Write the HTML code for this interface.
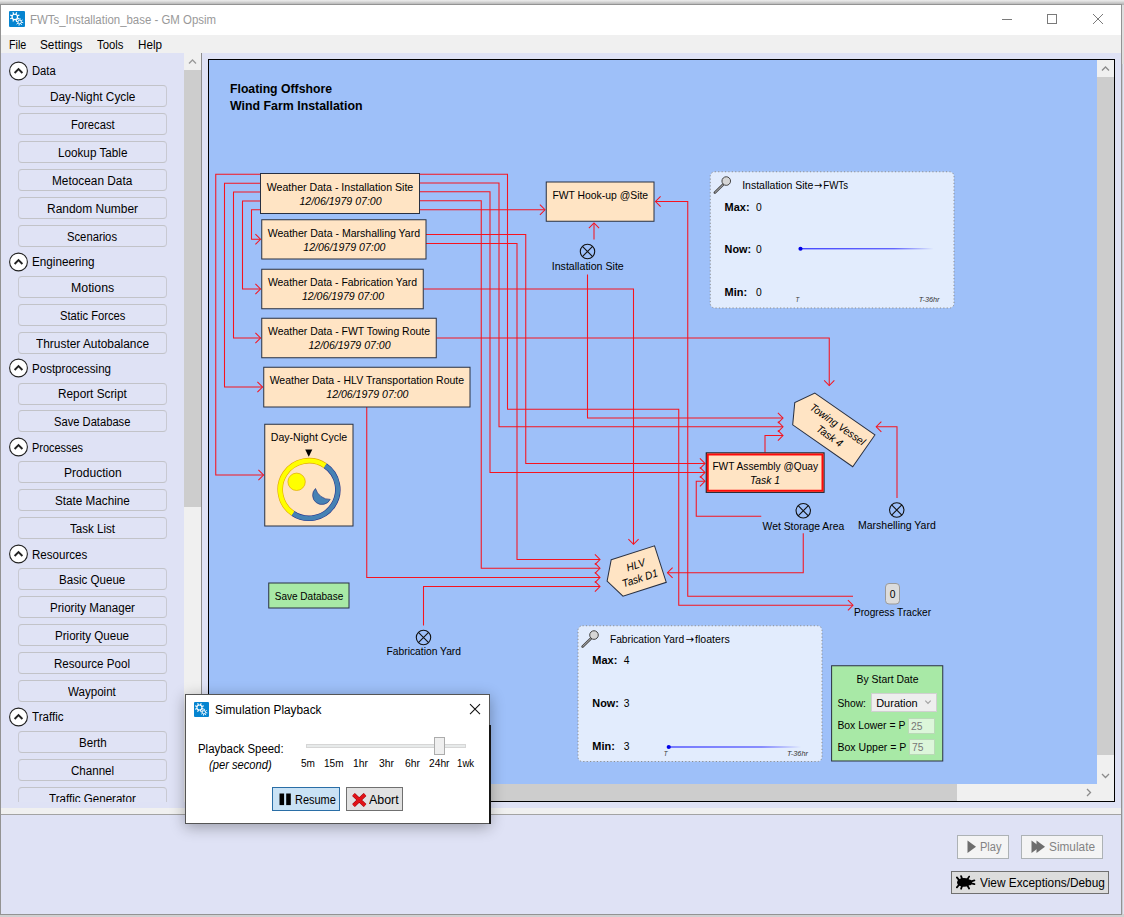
<!DOCTYPE html>
<html lang="en"><head><meta charset="utf-8"><title>FWTs_Installation_base - GM Opsim</title>
<style>
html,body{margin:0;padding:0}
body{width:1124px;height:917px;position:relative;overflow:hidden;background:#d0d0d0;font-family:"Liberation Sans",Arial,sans-serif;font-size:12px;color:#000}
.t{position:absolute;white-space:nowrap;line-height:1;transform-origin:0 0;display:block}
</style></head>
<body>
<div style="position:absolute;left:0px;top:0px;width:1124px;height:5px;background:linear-gradient(#ececec 0,#e0e0e0 25%,#c6c6c6 60%,#b0b0b0 100%);"></div>
<div style="position:absolute;left:1122px;top:5px;width:2px;height:59px;background:#dedede;"></div>
<div style="position:absolute;left:1122px;top:64px;width:2px;height:850px;background:#e1e4f1;border-left:1px solid #c9cbd3;box-sizing:border-box;"></div>
<div style="position:absolute;left:0px;top:4px;width:1122px;height:910.5px;background:#dfe2f5;border:1px solid #939393;box-sizing:border-box;"></div>
<div style="position:absolute;left:1px;top:5px;width:1120px;height:30px;background:#fff;"></div>
<svg style="position:absolute;left:9px;top:11px" width="16" height="16" viewBox="0 0 16 16"><rect width="16" height="16" rx="1.1" fill="#0584d0"/><line x1="8.29" y1="6.93" x2="10.42" y2="7.81" stroke="#fff" stroke-width="1.15"/><line x1="6.83" y1="8.39" x2="7.71" y2="10.52" stroke="#fff" stroke-width="1.15"/><line x1="4.77" y1="8.39" x2="3.89" y2="10.52" stroke="#fff" stroke-width="1.15"/><line x1="3.31" y1="6.93" x2="1.18" y2="7.81" stroke="#fff" stroke-width="1.15"/><line x1="3.31" y1="4.87" x2="1.18" y2="3.99" stroke="#fff" stroke-width="1.15"/><line x1="4.77" y1="3.41" x2="3.89" y2="1.28" stroke="#fff" stroke-width="1.15"/><line x1="6.83" y1="3.41" x2="7.71" y2="1.28" stroke="#fff" stroke-width="1.15"/><line x1="8.29" y1="4.87" x2="10.42" y2="3.99" stroke="#fff" stroke-width="1.15"/><circle cx="5.8" cy="5.9" r="2.7" fill="none" stroke="#fff" stroke-width="1.15"/><line x1="12.32" y1="11.3" x2="14.24" y2="11.64" stroke="#fff" stroke-width="0.9"/><line x1="11.6" y1="12.43" x2="12.72" y2="14.03" stroke="#fff" stroke-width="0.9"/><line x1="10.3" y1="12.72" x2="9.96" y2="14.64" stroke="#fff" stroke-width="0.9"/><line x1="9.17" y1="12" x2="7.57" y2="13.12" stroke="#fff" stroke-width="0.9"/><line x1="8.88" y1="10.7" x2="6.96" y2="10.36" stroke="#fff" stroke-width="0.9"/><line x1="9.6" y1="9.57" x2="8.48" y2="7.97" stroke="#fff" stroke-width="0.9"/><line x1="10.9" y1="9.28" x2="11.24" y2="7.36" stroke="#fff" stroke-width="0.9"/><line x1="12.03" y1="10" x2="13.63" y2="8.88" stroke="#fff" stroke-width="0.9"/><circle cx="10.6" cy="11" r="1.75" fill="none" stroke="#fff" stroke-width="0.9"/></svg>
<span class="t" style="left:30.2px;top:14.1px;font-size:12px;transform:scaleX(0.9519);color:#999;">FWTs_Installation_base - GM Opsim</span>
<svg style="position:absolute;left:990px;top:5px" width="131" height="30" viewBox="990 5 131 30" fill="none" stroke="#7a7a7a" stroke-width="1"><line x1="1002" y1="19.5" x2="1012" y2="19.5"/><rect x="1047.5" y="14.5" width="9" height="9"/><path d="M1093,14 L1103,24 M1103,14 L1093,24"/></svg>
<div style="position:absolute;left:1px;top:35px;width:1120px;height:18px;background:#f0f0f0;"></div>
<span class="t" style="left:8.5px;top:39px;font-size:12px;transform:scaleX(0.8947);">File</span>
<span class="t" style="left:39.7px;top:39px;font-size:12px;transform:scaleX(0.9802);">Settings</span>
<span class="t" style="left:97.3px;top:39px;font-size:12px;transform:scaleX(0.9424);">Tools</span>
<span class="t" style="left:138px;top:39px;font-size:12px;transform:scaleX(0.9724);">Help</span>
<div style="position:absolute;left:0px;top:53px;width:184px;height:749px;overflow:hidden;"><svg style="position:absolute;left:8px;top:7.9px" width="21" height="20" viewBox="0 0 21 20"><circle cx="10.5" cy="10" r="8.9" fill="#fff" stroke="#222" stroke-width="1.1"/><polyline points="6.6,12 10.5,8 14.4,12" fill="none" stroke="#222" stroke-width="1.9"/></svg><span class="t" style="left:32.4px;top:12.3px;font-size:12px;transform:scaleX(0.9350);">Data</span><div style="position:absolute;left:17.6px;top:32px;width:149.9px;height:22px;border:1px solid #c8c9d2;border-top-color:#c2c3c8;border-bottom-color:#c2c3c8;border-radius:4px;box-sizing:border-box;background:#e0e3f5;"></div><span class="t" style="left:49.7px;top:37.86px;font-size:12px;transform:scaleX(0.9851);">Day-Night Cycle</span><div style="position:absolute;left:17.6px;top:60px;width:149.9px;height:22px;border:1px solid #c8c9d2;border-top-color:#c2c3c8;border-bottom-color:#c2c3c8;border-radius:4px;box-sizing:border-box;background:#e0e3f5;"></div><span class="t" style="left:70.6px;top:65.82px;font-size:12px;transform:scaleX(0.9340);">Forecast</span><div style="position:absolute;left:17.6px;top:88px;width:149.9px;height:22px;border:1px solid #c8c9d2;border-top-color:#c2c3c8;border-bottom-color:#c2c3c8;border-radius:4px;box-sizing:border-box;background:#e0e3f5;"></div><span class="t" style="left:57.7px;top:93.78px;font-size:12px;transform:scaleX(0.9750);">Lookup Table</span><div style="position:absolute;left:17.6px;top:116px;width:149.9px;height:22px;border:1px solid #c8c9d2;border-top-color:#c2c3c8;border-bottom-color:#c2c3c8;border-radius:4px;box-sizing:border-box;background:#e0e3f5;"></div><span class="t" style="left:52.25px;top:121.74px;font-size:12px;transform:scaleX(0.9867);">Metocean Data</span><div style="position:absolute;left:17.6px;top:144px;width:149.9px;height:22px;border:1px solid #c8c9d2;border-top-color:#c2c3c8;border-bottom-color:#c2c3c8;border-radius:4px;box-sizing:border-box;background:#e0e3f5;"></div><span class="t" style="left:46.85px;top:149.7px;font-size:12px;transform:scaleX(0.9970);">Random Number</span><div style="position:absolute;left:17.6px;top:172px;width:149.9px;height:22px;border:1px solid #c8c9d2;border-top-color:#c2c3c8;border-bottom-color:#c2c3c8;border-radius:4px;box-sizing:border-box;background:#e0e3f5;"></div><span class="t" style="left:67.4px;top:177.66px;font-size:12px;transform:scaleX(0.9370);">Scenarios</span><svg style="position:absolute;left:8px;top:198.62px" width="21" height="20" viewBox="0 0 21 20"><circle cx="10.5" cy="10" r="8.9" fill="#fff" stroke="#222" stroke-width="1.1"/><polyline points="6.6,12 10.5,8 14.4,12" fill="none" stroke="#222" stroke-width="1.9"/></svg><span class="t" style="left:32.4px;top:203.02px;font-size:12px;transform:scaleX(0.9758);">Engineering</span><div style="position:absolute;left:17.6px;top:223px;width:149.9px;height:22px;border:1px solid #c8c9d2;border-top-color:#c2c3c8;border-bottom-color:#c2c3c8;border-radius:4px;box-sizing:border-box;background:#e0e3f5;"></div><span class="t" style="left:70.8px;top:228.58px;font-size:12px;transform:scaleX(1.0281);">Motions</span><div style="position:absolute;left:17.6px;top:251px;width:149.9px;height:22px;border:1px solid #c8c9d2;border-top-color:#c2c3c8;border-bottom-color:#c2c3c8;border-radius:4px;box-sizing:border-box;background:#e0e3f5;"></div><span class="t" style="left:59.7px;top:256.54px;font-size:12px;transform:scaleX(0.9340);">Static Forces</span><div style="position:absolute;left:17.6px;top:279px;width:149.9px;height:22px;border:1px solid #c8c9d2;border-top-color:#c2c3c8;border-bottom-color:#c2c3c8;border-radius:4px;box-sizing:border-box;background:#e0e3f5;"></div><span class="t" style="left:35.9px;top:284.5px;font-size:12px;transform:scaleX(0.9906);">Thruster Autobalance</span><svg style="position:absolute;left:8px;top:305.46px" width="21" height="20" viewBox="0 0 21 20"><circle cx="10.5" cy="10" r="8.9" fill="#fff" stroke="#222" stroke-width="1.1"/><polyline points="6.6,12 10.5,8 14.4,12" fill="none" stroke="#222" stroke-width="1.9"/></svg><span class="t" style="left:32.4px;top:309.86px;font-size:12px;transform:scaleX(0.9629);">Postprocessing</span><div style="position:absolute;left:17.6px;top:330px;width:149.9px;height:22px;border:1px solid #c8c9d2;border-top-color:#c2c3c8;border-bottom-color:#c2c3c8;border-radius:4px;box-sizing:border-box;background:#e0e3f5;"></div><span class="t" style="left:58px;top:335.42px;font-size:12px;transform:scaleX(0.9825);">Report Script</span><div style="position:absolute;left:17.6px;top:357px;width:149.9px;height:22px;border:1px solid #c8c9d2;border-top-color:#c2c3c8;border-bottom-color:#c2c3c8;border-radius:4px;box-sizing:border-box;background:#e0e3f5;"></div><span class="t" style="left:54.2px;top:363.38px;font-size:12px;transform:scaleX(0.9311);">Save Database</span><svg style="position:absolute;left:8px;top:384.34px" width="21" height="20" viewBox="0 0 21 20"><circle cx="10.5" cy="10" r="8.9" fill="#fff" stroke="#222" stroke-width="1.1"/><polyline points="6.6,12 10.5,8 14.4,12" fill="none" stroke="#222" stroke-width="1.9"/></svg><span class="t" style="left:32.4px;top:388.74px;font-size:12px;transform:scaleX(0.9103);">Processes</span><div style="position:absolute;left:17.6px;top:408px;width:149.9px;height:22px;border:1px solid #c8c9d2;border-top-color:#c2c3c8;border-bottom-color:#c2c3c8;border-radius:4px;box-sizing:border-box;background:#e0e3f5;"></div><span class="t" style="left:63.6px;top:414.3px;font-size:12px;transform:scaleX(1.0040);">Production</span><div style="position:absolute;left:17.6px;top:436px;width:149.9px;height:22px;border:1px solid #c8c9d2;border-top-color:#c2c3c8;border-bottom-color:#c2c3c8;border-radius:4px;box-sizing:border-box;background:#e0e3f5;"></div><span class="t" style="left:55px;top:442.26px;font-size:12px;transform:scaleX(0.9751);">State Machine</span><div style="position:absolute;left:17.6px;top:464px;width:149.9px;height:22px;border:1px solid #c8c9d2;border-top-color:#c2c3c8;border-bottom-color:#c2c3c8;border-radius:4px;box-sizing:border-box;background:#e0e3f5;"></div><span class="t" style="left:69.88px;top:470.22px;font-size:12px;transform:scaleX(0.9650);">Task List</span><svg style="position:absolute;left:8px;top:491.18px" width="21" height="20" viewBox="0 0 21 20"><circle cx="10.5" cy="10" r="8.9" fill="#fff" stroke="#222" stroke-width="1.1"/><polyline points="6.6,12 10.5,8 14.4,12" fill="none" stroke="#222" stroke-width="1.9"/></svg><span class="t" style="left:32.4px;top:495.58px;font-size:12px;transform:scaleX(0.9650);">Resources</span><div style="position:absolute;left:17.6px;top:515px;width:149.9px;height:22px;border:1px solid #c8c9d2;border-top-color:#c2c3c8;border-bottom-color:#c2c3c8;border-radius:4px;box-sizing:border-box;background:#e0e3f5;"></div><span class="t" style="left:59.25px;top:521.14px;font-size:12px;transform:scaleX(0.9650);">Basic Queue</span><div style="position:absolute;left:17.6px;top:543px;width:149.9px;height:22px;border:1px solid #c8c9d2;border-top-color:#c2c3c8;border-bottom-color:#c2c3c8;border-radius:4px;box-sizing:border-box;background:#e0e3f5;"></div><span class="t" style="left:49.92px;top:549.1px;font-size:12px;transform:scaleX(0.9650);">Priority Manager</span><div style="position:absolute;left:17.6px;top:571px;width:149.9px;height:22px;border:1px solid #c8c9d2;border-top-color:#c2c3c8;border-bottom-color:#c2c3c8;border-radius:4px;box-sizing:border-box;background:#e0e3f5;"></div><span class="t" style="left:55.39px;top:577.06px;font-size:12px;transform:scaleX(0.9650);">Priority Queue</span><div style="position:absolute;left:17.6px;top:599px;width:149.9px;height:22px;border:1px solid #c8c9d2;border-top-color:#c2c3c8;border-bottom-color:#c2c3c8;border-radius:4px;box-sizing:border-box;background:#e0e3f5;"></div><span class="t" style="left:54.42px;top:605.02px;font-size:12px;transform:scaleX(0.9650);">Resource Pool</span><div style="position:absolute;left:17.6px;top:627px;width:149.9px;height:22px;border:1px solid #c8c9d2;border-top-color:#c2c3c8;border-bottom-color:#c2c3c8;border-radius:4px;box-sizing:border-box;background:#e0e3f5;"></div><span class="t" style="left:68.48px;top:632.98px;font-size:12px;transform:scaleX(0.9650);">Waypoint</span><svg style="position:absolute;left:8px;top:653.94px" width="21" height="20" viewBox="0 0 21 20"><circle cx="10.5" cy="10" r="8.9" fill="#fff" stroke="#222" stroke-width="1.1"/><polyline points="6.6,12 10.5,8 14.4,12" fill="none" stroke="#222" stroke-width="1.9"/></svg><span class="t" style="left:32.4px;top:658.34px;font-size:12px;transform:scaleX(0.9650);">Traffic</span><div style="position:absolute;left:17.6px;top:678px;width:149.9px;height:22px;border:1px solid #c8c9d2;border-top-color:#c2c3c8;border-bottom-color:#c2c3c8;border-radius:4px;box-sizing:border-box;background:#e0e3f5;"></div><span class="t" style="left:78.56px;top:683.9px;font-size:12px;transform:scaleX(0.9650);">Berth</span><div style="position:absolute;left:17.6px;top:706px;width:149.9px;height:22px;border:1px solid #c8c9d2;border-top-color:#c2c3c8;border-bottom-color:#c2c3c8;border-radius:4px;box-sizing:border-box;background:#e0e3f5;"></div><span class="t" style="left:70.83px;top:711.86px;font-size:12px;transform:scaleX(0.9650);">Channel</span><div style="position:absolute;left:17.6px;top:734px;width:149.9px;height:22px;border:1px solid #c8c9d2;border-top-color:#c2c3c8;border-bottom-color:#c2c3c8;border-radius:4px;box-sizing:border-box;background:#e0e3f5;"></div><span class="t" style="left:48.96px;top:739.82px;font-size:12px;transform:scaleX(0.9650);">Traffic Generator</span></div>
<div style="position:absolute;left:184px;top:53px;width:17px;height:749px;background:#f0f0f0;"></div>
<div style="position:absolute;left:184px;top:70px;width:17px;height:437px;background:#cdcdcd;"></div>
<div style="position:absolute;left:201px;top:53px;width:1px;height:755px;background:#8e8e8e;"></div>
<svg style="position:absolute;left:184px;top:53px" width="17" height="17" viewBox="0 0 17 17"><polyline points="5,10.5 8.5,7 12,10.5" fill="none" stroke="#9a9a9a" stroke-width="1.3"/></svg>
<div style="position:absolute;left:208px;top:59px;width:907px;height:743px;background:#f0f0f0;border:1px solid #000;box-sizing:border-box;"></div>
<svg width="888" height="724" viewBox="209 60 888 724" style="position:absolute;left:209px;top:60px;background:#9ec0f9" font-family="Liberation Sans, Arial, sans-serif">
<g fill="none" stroke="#f6141f" stroke-width="1.05" stroke-linejoin="miter">
<polyline points="260.5,174.25 215.75,174.25 215.75,475 263.5,475"/><polyline points="258.4,469.9 263.5,475 258.4,480.1"/>
<polyline points="260.5,183.25 224.5,183.25 224.5,387 262.5,387"/><polyline points="257.4,381.9 262.5,387 257.4,392.1"/>
<polyline points="260.5,192 233.5,192 233.5,338 260.5,338"/><polyline points="255.4,332.9 260.5,338 255.4,343.1"/>
<polyline points="260.5,201 242.5,201 242.5,289 260.5,289"/><polyline points="255.4,283.9 260.5,289 255.4,294.1"/>
<polyline points="260.5,209.75 251.5,209.75 251.5,239.25 260.5,239.25"/><polyline points="255.4,234.15 260.5,239.25 255.4,244.35"/>
<polyline points="419.5,174.25 507.5,174.25 507.5,409.25 678.75,409.25 678.75,605.25 853,605.25"/><polyline points="847.9,600.15 853,605.25 847.9,610.35"/>
<polyline points="419.5,183 499,183 499,426.75 783,426.75"/><polyline points="777.9,421.65 783,426.75 777.9,431.85"/>
<polyline points="419.5,191.75 490,191.75 490,472.5 705,472.5"/><polyline points="699.9,467.4 705,472.5 699.9,477.6"/>
<polyline points="419.5,200.75 481.25,200.75 481.25,568.25 600,568.25"/><polyline points="594.9,563.15 600,568.25 594.9,573.35"/>
<polyline points="419.5,209.75 545,209.75"/><polyline points="539.9,204.65 545,209.75 539.9,214.85"/>
<polyline points="426,234.5 525.75,234.5 525.75,463.5 705,463.5"/><polyline points="699.9,458.4 705,463.5 699.9,468.6"/>
<polyline points="426,243.5 517,243.5 517,559.5 600,559.5"/><polyline points="594.9,554.4 600,559.5 594.9,564.6"/>
<polyline points="423.5,289 633.5,289 633.5,544.25"/><polyline points="628.4,539.15 633.5,544.25 638.6,539.15"/>
<polyline points="436.5,338 829.25,338 829.25,385.5"/><polyline points="824.15,380.4 829.25,385.5 834.35,380.4"/>
<polyline points="366.75,407 366.75,577.5 600,577.5"/><polyline points="594.9,572.4 600,577.5 594.9,582.6"/>
<polyline points="423.5,625.5 423.5,586.5 600,586.5"/><polyline points="594.9,581.4 600,586.5 594.9,591.6"/>
<polyline points="594,239.5 594,223"/><polyline points="588.9,228.1 594,223 599.1,228.1"/>
<polyline points="587.5,274.5 587.5,418 783,418"/><polyline points="777.9,412.9 783,418 777.9,423.1"/>
<polyline points="853,596.25 687.75,596.25 687.75,201.5 655.5,201.5"/><polyline points="660.6,196.4 655.5,201.5 660.6,206.6"/>
<polyline points="765,452.5 765,435.5 783,435.5"/><polyline points="777.9,430.4 783,435.5 777.9,440.6"/>
<polyline points="761.25,516.25 696.25,516.25 696.25,481.25 705,481.25"/><polyline points="699.9,476.15 705,481.25 699.9,486.35"/>
<polyline points="803.25,533.25 803.25,572.75 667.5,572.75"/><polyline points="672.6,567.65 667.5,572.75 672.6,577.85"/>
<polyline points="897,498 897,426.75 876.25,426.75"/><polyline points="881.35,421.65 876.25,426.75 881.35,431.85"/>
</g>
<rect x="260.5" y="173.5" width="159" height="40" fill="#ffe4c4" stroke="#283042" stroke-width="1"/>
<text x="340" y="190.6" font-size="10.8" text-anchor="middle" textLength="146.5" lengthAdjust="spacingAndGlyphs">Weather Data - Installation Site</text>
<text x="340.5" y="204.5" font-size="10.8" text-anchor="middle" font-style="italic" textLength="82.25" lengthAdjust="spacingAndGlyphs">12/06/1979 07:00</text>
<rect x="261.75" y="219.75" width="164.25" height="39.25" fill="#ffe4c4" stroke="#283042" stroke-width="1"/>
<text x="343.88" y="236.85" font-size="10.8" text-anchor="middle" textLength="152.5" lengthAdjust="spacingAndGlyphs">Weather Data - Marshalling Yard</text>
<text x="344.38" y="250.75" font-size="10.8" text-anchor="middle" font-style="italic" textLength="82.25" lengthAdjust="spacingAndGlyphs">12/06/1979 07:00</text>
<rect x="261.75" y="269.25" width="161.5" height="39.5" fill="#ffe4c4" stroke="#283042" stroke-width="1"/>
<text x="342.5" y="286.35" font-size="10.8" text-anchor="middle" textLength="149.25" lengthAdjust="spacingAndGlyphs">Weather Data - Fabrication Yard</text>
<text x="343" y="300.25" font-size="10.8" text-anchor="middle" font-style="italic" textLength="82.25" lengthAdjust="spacingAndGlyphs">12/06/1979 07:00</text>
<rect x="261.75" y="318.25" width="174.5" height="39.5" fill="#ffe4c4" stroke="#283042" stroke-width="1"/>
<text x="349" y="335.35" font-size="10.8" text-anchor="middle" textLength="162" lengthAdjust="spacingAndGlyphs">Weather Data - FWT Towing Route</text>
<text x="349.5" y="349.25" font-size="10.8" text-anchor="middle" font-style="italic" textLength="82.25" lengthAdjust="spacingAndGlyphs">12/06/1979 07:00</text>
<rect x="263.75" y="367.25" width="206.25" height="39.75" fill="#ffe4c4" stroke="#283042" stroke-width="1"/>
<text x="366.88" y="384.35" font-size="10.8" text-anchor="middle" textLength="194.5" lengthAdjust="spacingAndGlyphs">Weather Data - HLV Transportation Route</text>
<text x="367.38" y="398.25" font-size="10.8" text-anchor="middle" font-style="italic" textLength="82.25" lengthAdjust="spacingAndGlyphs">12/06/1979 07:00</text>
<text x="230" y="92.9" font-size="12.6" font-weight="bold" textLength="102" lengthAdjust="spacingAndGlyphs">Floating Offshore</text>
<text x="230" y="109.6" font-size="12.6" font-weight="bold" textLength="132.5" lengthAdjust="spacingAndGlyphs">Wind Farm Installation</text>
<rect x="264.75" y="424.25" width="88.25" height="101.75" fill="#ffe4c4" stroke="#283042" stroke-width="1"/>
<text x="309" y="440.75" font-size="10.8" text-anchor="middle" textLength="76.5" lengthAdjust="spacingAndGlyphs">Day-Night Cycle</text>
<polygon points="305.2,449.4 312.3,449.4 308.75,456.8" fill="#000"/>
<path d="M325.1,465.62 A28.8,28.8 0 0 1 292.9,513.38" fill="none" stroke="#24308a" stroke-width="5.5"/>
<path d="M292.9,513.38 A28.8,28.8 0 0 1 325.1,465.62" fill="none" stroke="#e0a800" stroke-width="5.6"/>
<path d="M325.1,465.62 A28.8,28.8 0 0 1 292.9,513.38" fill="none" stroke="#4682b4" stroke-width="4.4"/>
<path d="M292.9,513.38 A28.8,28.8 0 0 1 325.1,465.62" fill="none" stroke="#ffff00" stroke-width="4.4"/>
<circle cx="296.6" cy="481.8" r="8.7" fill="#ffff00" stroke="#e0a800" stroke-width="0.7"/>
<path d="M315.5,488.5 A9.29,9.29 0 1 0 330.2,499.4 A15,15 0 0 1 315.5,488.5 Z" fill="#4682b4" stroke="#1c2878" stroke-width="0.6" stroke-linejoin="round"/>
<rect x="268.75" y="583" width="80.25" height="25" fill="#a8e9a6" stroke="#283042" stroke-width="1"/>
<text x="309" y="600" font-size="10.8" text-anchor="middle" textLength="68.5" lengthAdjust="spacingAndGlyphs">Save Database</text>
<rect x="546.25" y="182" width="107.75" height="39.25" fill="#ffe4c4" stroke="#283042" stroke-width="1"/>
<text x="600.25" y="199.25" font-size="10.8" text-anchor="middle" textLength="95.75" lengthAdjust="spacingAndGlyphs">FWT Hook-up @Site</text>
<rect x="706.3" y="452.9" width="117.7" height="39.4" fill="#ffe4c4" stroke="#1c1c24" stroke-width="1.2"/>
<rect x="707.75" y="454.5" width="114.75" height="36.25" fill="none" stroke="#ff0a0a" stroke-width="2"/>
<text x="765.25" y="470" font-size="10.8" text-anchor="middle" textLength="105.75" lengthAdjust="spacingAndGlyphs">FWT Assembly @Quay</text>
<text x="765" y="483.75" font-size="10.8" text-anchor="middle" font-style="italic" textLength="30.01" lengthAdjust="spacingAndGlyphs">Task 1</text>
<g stroke="#111" stroke-width="1.1" fill="none"><circle cx="587.5" cy="251.5" r="7.2"/><path d="M582.41,246.41 L592.59,256.59 M592.59,246.41 L582.41,256.59"/></g><text x="587.75" y="270" font-size="10.8" text-anchor="middle" textLength="72" lengthAdjust="spacingAndGlyphs">Installation Site</text>
<g stroke="#111" stroke-width="1.1" fill="none"><circle cx="803.25" cy="510.75" r="7.2"/><path d="M798.16,505.66 L808.34,515.84 M808.34,505.66 L798.16,515.84"/></g><text x="803.4" y="529.5" font-size="10.8" text-anchor="middle" textLength="81.75" lengthAdjust="spacingAndGlyphs">Wet Storage Area</text>
<g stroke="#111" stroke-width="1.1" fill="none"><circle cx="896.75" cy="510" r="7.2"/><path d="M891.66,504.91 L901.84,515.09 M901.84,504.91 L891.66,515.09"/></g><text x="896.9" y="528.75" font-size="10.8" text-anchor="middle" textLength="77.75" lengthAdjust="spacingAndGlyphs">Marshelling Yard</text>
<g stroke="#111" stroke-width="1.1" fill="none"><circle cx="423.5" cy="637.5" r="7.2"/><path d="M418.41,632.41 L428.59,642.59 M428.59,632.41 L418.41,642.59"/></g><text x="423.75" y="655" font-size="10.8" text-anchor="middle" textLength="74.5" lengthAdjust="spacingAndGlyphs">Fabrication Yard</text>
<g transform="translate(833.8,429.9) rotate(34.9)"><polygon points="-36.6,-19.4 36.6,-19.4 36.6,19.4 -36.6,19.4 -47.6,0" fill="#ffe4c4" stroke="#283042" stroke-width="1"/><text x="0" y="-3" font-size="10.8" text-anchor="middle" font-style="italic" textLength="64.71" lengthAdjust="spacingAndGlyphs">Towing Vessel</text><text x="0" y="11" font-size="10.8" text-anchor="middle" font-style="italic" textLength="29.53" lengthAdjust="spacingAndGlyphs">Task 4</text></g>
<g transform="translate(638.75,571) rotate(-17.8)"><polygon points="-22.75,-19.2 22.75,-19.2 22.75,19.2 -22.75,19.2 -33.25,0" fill="#ffe4c4" stroke="#283042" stroke-width="1"/><text x="-1" y="-3" font-size="10.8" text-anchor="middle" font-style="italic" textLength="19.19" lengthAdjust="spacingAndGlyphs">HLV</text><text x="-1" y="11" font-size="10.8" text-anchor="middle" font-style="italic" textLength="36.87" lengthAdjust="spacingAndGlyphs">Task D1</text></g>
<rect x="885.5" y="583.5" width="14" height="20.5" rx="3.5" fill="#dcdcdc" stroke="#9a9a9a" stroke-width="1"/>
<text x="892.5" y="597.5" font-size="10.8" text-anchor="middle" textLength="5.74" lengthAdjust="spacingAndGlyphs">0</text>
<text x="892.5" y="615.5" font-size="10.8" text-anchor="middle" textLength="77" lengthAdjust="spacingAndGlyphs">Progress Tracker</text>
<rect x="710.25" y="171.75" width="243.75" height="136.25" rx="4.5" fill="#e2ecfd" stroke="#8e8e8e" stroke-width="1" stroke-dasharray="1.2 2.2"/><line x1="723.05" y1="184.65" x2="714.85" y2="192.65" stroke="#444" stroke-width="2.6" stroke-linecap="round"/><line x1="723.05" y1="184.65" x2="715.05" y2="192.45" stroke="#ccc" stroke-width="0.9" stroke-linecap="round"/><circle cx="726.25" cy="181.05" r="4.3" fill="#d6d6d6" stroke="#444" stroke-width="1"/><text x="742.15" y="189.05" font-size="10.8" textLength="71.25" lengthAdjust="spacingAndGlyphs">Installation Site</text><text x="818.38" y="188.55" font-size="10.5" text-anchor="middle" font-family="DejaVu Sans, sans-serif" textLength="8.25" lengthAdjust="spacingAndGlyphs">→</text><text x="823.25" y="189.05" font-size="10.8" textLength="24.75" lengthAdjust="spacingAndGlyphs">FWTs</text><text x="724.55" y="211" font-size="10.8" font-weight="bold" textLength="25" lengthAdjust="spacingAndGlyphs">Max:</text><text x="755.95" y="211" font-size="10.8" textLength="5.74" lengthAdjust="spacingAndGlyphs">0</text><text x="724.55" y="253" font-size="10.8" font-weight="bold" textLength="26.5" lengthAdjust="spacingAndGlyphs">Now:</text><text x="755.95" y="253" font-size="10.8" textLength="5.74" lengthAdjust="spacingAndGlyphs">0</text><text x="724.55" y="295.75" font-size="10.8" font-weight="bold" textLength="22.5" lengthAdjust="spacingAndGlyphs">Min:</text><text x="755.95" y="295.75" font-size="10.8" textLength="5.74" lengthAdjust="spacingAndGlyphs">0</text><defs><linearGradient id="g709" x1="0" x2="1" y1="0" y2="0"><stop offset="0" stop-color="#1a1aff" stop-opacity="0.9"/><stop offset="0.7" stop-color="#1a1aff" stop-opacity="0.75"/><stop offset="1" stop-color="#0000ff" stop-opacity="0"/></linearGradient></defs><rect x="800.5" y="248.15" width="133.25" height="1.2" fill="url(#g709)"/><circle cx="800.5" cy="248.75" r="2.1" fill="#0000e8"/><text x="795.5" y="301.5" font-size="6.5" font-style="italic" fill="#333" textLength="3.79" lengthAdjust="spacingAndGlyphs">T</text><text x="918.75" y="301.5" font-size="6.5" font-style="italic" fill="#333" textLength="20.75" lengthAdjust="spacingAndGlyphs">T-36hr</text>
<rect x="578" y="625.75" width="244" height="135.75" rx="4.5" fill="#e2ecfd" stroke="#8e8e8e" stroke-width="1" stroke-dasharray="1.2 2.2"/><line x1="590.8" y1="638.65" x2="582.6" y2="646.65" stroke="#444" stroke-width="2.6" stroke-linecap="round"/><line x1="590.8" y1="638.65" x2="582.8" y2="646.45" stroke="#ccc" stroke-width="0.9" stroke-linecap="round"/><circle cx="594" cy="635.05" r="4.3" fill="#d6d6d6" stroke="#444" stroke-width="1"/><text x="609.9" y="643.05" font-size="10.8" textLength="74.25" lengthAdjust="spacingAndGlyphs">Fabrication Yard</text><text x="690" y="642.55" font-size="10.5" text-anchor="middle" font-family="DejaVu Sans, sans-serif" textLength="8.5" lengthAdjust="spacingAndGlyphs">→</text><text x="695" y="643.05" font-size="10.8" textLength="34.75" lengthAdjust="spacingAndGlyphs">floaters</text><text x="592.3" y="663.75" font-size="10.8" font-weight="bold" textLength="25" lengthAdjust="spacingAndGlyphs">Max:</text><text x="623.7" y="663.75" font-size="10.8" textLength="5.74" lengthAdjust="spacingAndGlyphs">4</text><text x="592.3" y="706.75" font-size="10.8" font-weight="bold" textLength="26.5" lengthAdjust="spacingAndGlyphs">Now:</text><text x="623.7" y="706.75" font-size="10.8" textLength="5.74" lengthAdjust="spacingAndGlyphs">3</text><text x="592.3" y="749.5" font-size="10.8" font-weight="bold" textLength="22.5" lengthAdjust="spacingAndGlyphs">Min:</text><text x="623.7" y="749.5" font-size="10.8" textLength="5.74" lengthAdjust="spacingAndGlyphs">3</text><defs><linearGradient id="g577" x1="0" x2="1" y1="0" y2="0"><stop offset="0" stop-color="#1a1aff" stop-opacity="0.9"/><stop offset="0.7" stop-color="#1a1aff" stop-opacity="0.75"/><stop offset="1" stop-color="#0000ff" stop-opacity="0"/></linearGradient></defs><rect x="668.75" y="746.4" width="132.5" height="1.2" fill="url(#g577)"/><circle cx="668.75" cy="747" r="2.1" fill="#0000e8"/><text x="663.75" y="755.5" font-size="6.5" font-style="italic" fill="#333" textLength="3.79" lengthAdjust="spacingAndGlyphs">T</text><text x="787" y="755.5" font-size="6.5" font-style="italic" fill="#333" textLength="21" lengthAdjust="spacingAndGlyphs">T-36hr</text>
<rect x="831.6" y="665.75" width="111.15" height="95.25" fill="#a8e9a6" stroke="#2b3140" stroke-width="1"/>
<text x="887.5" y="682.5" font-size="10.8" text-anchor="middle" textLength="62" lengthAdjust="spacingAndGlyphs">By Start Date</text>
<text x="837.4" y="707.2" font-size="10.8" textLength="28.5" lengthAdjust="spacingAndGlyphs">Show:</text>
<rect x="871.5" y="693.5" width="65" height="18" fill="#eeeeee" stroke="#d0d0d0" stroke-width="1"/>
<text x="876.2" y="707.2" font-size="10.8" textLength="41.5" lengthAdjust="spacingAndGlyphs">Duration</text>
<polyline points="925.3,700.6 928,703.3 930.7,700.6" fill="none" stroke="#a2a2a2" stroke-width="1.2"/>
<text x="837.4" y="729" font-size="10.8" textLength="68" lengthAdjust="spacingAndGlyphs">Box Lower = P</text>
<rect x="908.5" y="718.5" width="26" height="15" fill="#dcf6da" stroke="#b9d9b7" stroke-width="1"/>
<text x="911" y="729.5" font-size="10.8" fill="#777" textLength="11.47" lengthAdjust="spacingAndGlyphs">25</text>
<text x="837.4" y="751" font-size="10.8" textLength="69" lengthAdjust="spacingAndGlyphs">Box Upper = P</text>
<rect x="909.5" y="739.5" width="25" height="15" fill="#dcf6da" stroke="#b9d9b7" stroke-width="1"/>
<text x="912" y="751" font-size="10.8" fill="#777" textLength="11.47" lengthAdjust="spacingAndGlyphs">75</text>
</svg>
<div style="position:absolute;left:1097px;top:77px;width:17px;height:677.6px;background:#cdcdcd;"></div>
<svg style="position:absolute;left:1097px;top:60px" width="17" height="724" viewBox="0 0 17 724" fill="none" stroke="#8c8c8c" stroke-width="1.3"><polyline points="5,10.5 8.5,7 12,10.5"/><polyline points="5,714 8.5,717.5 12,714"/></svg>
<div style="position:absolute;left:226px;top:784px;width:731.2px;height:17px;background:#cdcdcd;"></div>
<svg style="position:absolute;left:1080px;top:784px" width="17" height="17" viewBox="0 0 17 17" fill="none" stroke="#8c8c8c" stroke-width="1.3"><polyline points="7,5 10.5,8.5 7,12"/></svg>
<div style="position:absolute;left:1px;top:808px;width:1120px;height:6px;background:#f0f0f0;"></div>
<div style="position:absolute;left:1px;top:814px;width:1120px;height:1px;background:#a3a3a3;"></div>
<div style="position:absolute;left:957px;top:835px;width:52px;height:24px;background:#f4f4f4;border:1px solid #adb2b5;box-sizing:border-box;"><svg style="position:absolute;left:8px;top:4px" width="12" height="14" viewBox="0 0 12 14"><polygon points="1.5,0.5 10,6.7 1.5,13" fill="#6d6d6d"/></svg></div>
<span class="t" style="left:979.8px;top:840.9px;font-size:12px;transform:scaleX(0.9210);color:#838383;">Play</span>
<div style="position:absolute;left:1021px;top:835px;width:82px;height:24px;background:#f4f4f4;border:1px solid #adb2b5;box-sizing:border-box;"><svg style="position:absolute;left:8px;top:4px" width="18" height="14" viewBox="0 0 18 14"><polygon points="1.5,0.5 10,6.7 1.5,13" fill="#6d6d6d"/><polygon points="6.5,0.5 15,6.7 6.5,13" fill="#6d6d6d"/></svg></div>
<span class="t" style="left:1049.4px;top:840.9px;font-size:12px;transform:scaleX(0.9852);color:#838383;">Simulate</span>
<div style="position:absolute;left:951px;top:871px;width:158px;height:23px;background:#dddddd;border:1px solid #707070;box-sizing:border-box;"><svg style="position:absolute;left:4px;top:3px" width="20" height="16" viewBox="0 0 20 16"><ellipse cx="7.8" cy="7.4" rx="6.8" ry="4.4" fill="#000"/><ellipse cx="13" cy="7.4" rx="3" ry="2.9" fill="#000"/><path d="M6.5,5 L5.1,1.1 M3.5,5.6 L0.9,2.4 M11,5 L13.1,1.6 M6.5,9.8 L5.1,13.7 M3.5,9.2 L0.9,12.4 M11,9.8 L13.1,13.5 M14.5,6.6 L18.4,5.4 M14.5,8.2 L18.4,9.2" stroke="#000" stroke-width="1.8" stroke-linecap="round" fill="none"/></svg></div>
<span class="t" style="left:979.9px;top:876.8px;font-size:12px;transform:scaleX(0.9864);">View Exceptions/Debug</span>
<div style="position:absolute;left:185px;top:694px;width:305px;height:130px;background:#fff;border:1px solid #555;box-sizing:border-box;box-shadow:0 3px 14px rgba(0,0,0,0.32);"><svg style="position:absolute;left:8.2px;top:6.8px" width="15" height="15" viewBox="0 0 16 16"><rect width="16" height="16" rx="1.1" fill="#0584d0"/><line x1="8.29" y1="6.93" x2="10.42" y2="7.81" stroke="#fff" stroke-width="1.15"/><line x1="6.83" y1="8.39" x2="7.71" y2="10.52" stroke="#fff" stroke-width="1.15"/><line x1="4.77" y1="8.39" x2="3.89" y2="10.52" stroke="#fff" stroke-width="1.15"/><line x1="3.31" y1="6.93" x2="1.18" y2="7.81" stroke="#fff" stroke-width="1.15"/><line x1="3.31" y1="4.87" x2="1.18" y2="3.99" stroke="#fff" stroke-width="1.15"/><line x1="4.77" y1="3.41" x2="3.89" y2="1.28" stroke="#fff" stroke-width="1.15"/><line x1="6.83" y1="3.41" x2="7.71" y2="1.28" stroke="#fff" stroke-width="1.15"/><line x1="8.29" y1="4.87" x2="10.42" y2="3.99" stroke="#fff" stroke-width="1.15"/><circle cx="5.8" cy="5.9" r="2.7" fill="none" stroke="#fff" stroke-width="1.15"/><line x1="12.32" y1="11.3" x2="14.24" y2="11.64" stroke="#fff" stroke-width="0.9"/><line x1="11.6" y1="12.43" x2="12.72" y2="14.03" stroke="#fff" stroke-width="0.9"/><line x1="10.3" y1="12.72" x2="9.96" y2="14.64" stroke="#fff" stroke-width="0.9"/><line x1="9.17" y1="12" x2="7.57" y2="13.12" stroke="#fff" stroke-width="0.9"/><line x1="8.88" y1="10.7" x2="6.96" y2="10.36" stroke="#fff" stroke-width="0.9"/><line x1="9.6" y1="9.57" x2="8.48" y2="7.97" stroke="#fff" stroke-width="0.9"/><line x1="10.9" y1="9.28" x2="11.24" y2="7.36" stroke="#fff" stroke-width="0.9"/><line x1="12.03" y1="10" x2="13.63" y2="8.88" stroke="#fff" stroke-width="0.9"/><circle cx="10.6" cy="11" r="1.75" fill="none" stroke="#fff" stroke-width="0.9"/></svg><span class="t" style="left:29.4px;top:9px;font-size:12px;transform:scaleX(0.9856);">Simulation Playback</span><svg style="position:absolute;left:283px;top:8px" width="12" height="12" viewBox="0 0 12 12"><path d="M1,1.2 L11,11.2 M11,1.2 L1,11.2" stroke="#111" stroke-width="1.1" fill="none"/></svg><span class="t" style="left:12.1px;top:48.3px;font-size:12px;transform:scaleX(0.9505);">Playback Speed:</span><span class="t" style="left:23.3px;top:64.3px;font-size:12px;transform:scaleX(0.9307);font-style:italic;">(per second)</span><div style="position:absolute;left:120px;top:49px;width:160px;height:3.5px;background:#e7eaea;border:1px solid #d6d6d6;box-sizing:border-box;"></div><div style="position:absolute;left:248px;top:42px;width:11px;height:18px;background:#efefef;border:1px solid #acacac;box-sizing:border-box;"></div><span class="t" style="left:114.7px;top:62.65px;font-size:10.5px;transform:scaleX(0.9598);">5m</span><span class="t" style="left:138.3px;top:62.65px;font-size:10.5px;transform:scaleX(0.9546);">15m</span><span class="t" style="left:166.7px;top:62.65px;font-size:10.5px;transform:scaleX(0.9884);">1hr</span><span class="t" style="left:192.7px;top:62.65px;font-size:10.5px;transform:scaleX(0.9884);">3hr</span><span class="t" style="left:219.3px;top:62.65px;font-size:10.5px;transform:scaleX(0.9884);">6hr</span><span class="t" style="left:242.6px;top:62.65px;font-size:10.5px;transform:scaleX(0.9754);">24hr</span><span class="t" style="left:270.8px;top:62.65px;font-size:10.5px;transform:scaleX(0.9211);">1wk</span><div style="position:absolute;left:86px;top:92px;width:68px;height:24px;background:#c9e2f5;border:1px solid #2a6ea6;box-sizing:border-box;"><svg style="position:absolute;left:6px;top:5px" width="13" height="13" viewBox="0 0 13 13"><rect x="0.5" y="0.5" width="4.6" height="11.6" fill="#000"/><rect x="7.2" y="0.5" width="4.6" height="11.6" fill="#000"/></svg></div><span class="t" style="left:109px;top:99px;font-size:12px;transform:scaleX(0.9131);">Resume</span><div style="position:absolute;left:160px;top:92px;width:57px;height:24px;background:#e1e1e1;border:1px solid #707070;box-sizing:border-box;"><svg style="position:absolute;left:5px;top:4.5px" width="15" height="14" viewBox="0 0 15 14"><path d="M1.5,1.5 L13,12.5 M13,1.5 L1.5,12.5" stroke="#9c0a10" stroke-width="3.9" fill="none"/><path d="M1.5,1.5 L13,12.5 M13,1.5 L1.5,12.5" stroke="#ee1418" stroke-width="2.7" fill="none"/><path d="M1.5,1.5 L13,12.5 M13,1.5 L1.5,12.5" stroke="#8a0d12" stroke-width="0.6" fill="none" opacity="0.4"/></svg></div><span class="t" style="left:182.7px;top:99px;font-size:12px;transform:scaleX(1.0355);">Abort</span></div>
<div style="position:absolute;left:489px;top:725px;width:2px;height:99px;background:#151515;"></div>
</body></html>
